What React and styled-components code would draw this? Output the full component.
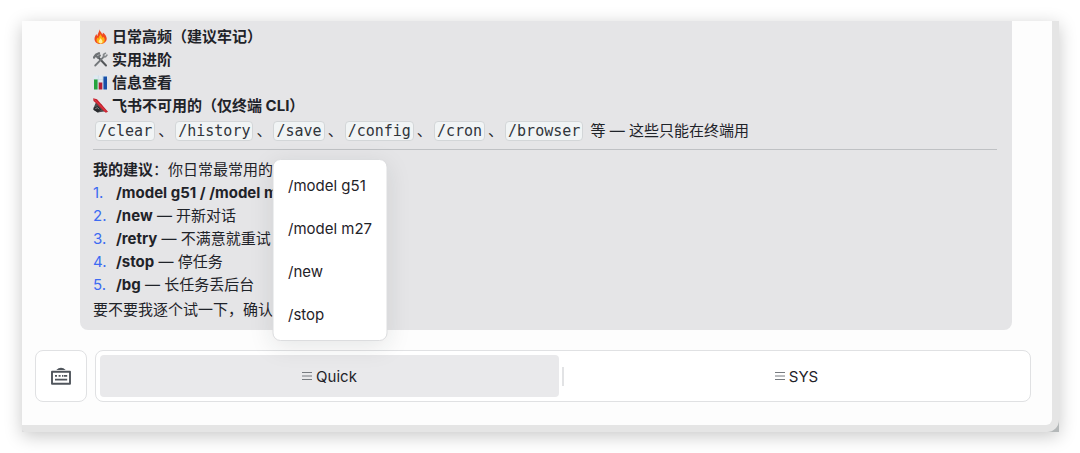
import React from "react";
import styled, { createGlobalStyle } from "styled-components";

const GlobalStyle = createGlobalStyle`
  *, *::before, *::after { box-sizing: border-box; }
  body {
    margin: 0;
    padding: 21px 21px 21px 22px;
    background: #fff;
    color: #1f2329;
    font: 15px/23px Inter, "Noto Sans CJK SC", sans-serif;
  }
  p, ul, ol { margin: 0; padding: 0; list-style: none; }
  button { font: inherit; color: inherit; cursor: pointer; }
`;

const Frame = styled.div`
  background: #b4b8b9;
  border-radius: 2px 0 0 2px;
  box-shadow: 0 4px 18px rgba(0, 0, 0, 0.22);
`;

const Edge = styled.div`
  padding: 0 7px 7px 0;
  background: #e5e5e5;
  border-radius: 2px 0 12px 2px;
`;

const Chat = styled.main`
  background: #fdfdfd;
  border-bottom-right-radius: 6px;
`;

const Bubble = styled.article`
  margin: 0 40px 0 58px;
  padding: 4px 15px 9px 13px;
  background: #e5e5e7;
  border-radius: 0 0 8px 8px;
`;

const Topic = styled.li`
  display: flex;
  align-items: center;
  gap: 4px;
  font-weight: 700;
  svg { width: 15px; height: 15px; flex: none; }
`;

const Commands = styled.p`
  margin-top: 2px;
`;

const Code = styled.code`
  display: inline-block;
  margin: 0 3px 0 2px;
  padding: 0 2px;
  border: 1px solid #d3d6d8;
  border-radius: 4px;
  background: #f1f4f5;
  color: #30353b;
  font: 15px/18px "DejaVu Sans Mono", monospace;
`;

const Rule = styled.hr`
  height: 1px;
  margin: 7px 0 8px;
  border: 0;
  background: #bfc1c4;
`;

const Steps = styled.ol`
  margin: 0 0 2px;
  counter-reset: step;
`;

const Step = styled.li`
  display: flex;
  counter-increment: step;
  &::before {
    content: counter(step) ".";
    width: 23px;
    color: #3d6bf2;
  }
`;

const Toolbar = styled.nav`
  display: flex;
  gap: 8px;
  padding: 20px 21px 23px 13px;
`;

const KeyboardButton = styled.button`
  display: grid;
  place-items: center;
  width: 52px;
  height: 52px;
  padding: 0;
  border: 1px solid #e0e1e3;
  border-radius: 8px;
  background: #fff;
`;

const Segments = styled.div`
  display: flex;
  flex: 1;
  align-items: center;
  gap: 3px;
  height: 52px;
  padding: 4px;
  border: 1px solid #e0e1e3;
  border-radius: 8px;
  background: #fff;
`;

const Segment = styled.div`
  position: relative;
  flex: 1;
  height: 100%;
`;

const SegmentButton = styled.button`
  display: flex;
  align-items: center;
  justify-content: center;
  gap: 4px;
  width: 100%;
  height: 100%;
  padding: 0;
  border: 0;
  border-radius: 4px;
  background: ${(p) => (p.$active ? "#e9e9eb" : "transparent")};
`;

const Divider = styled.span`
  width: 2px;
  height: 19px;
  background: #e2e3e5;
`;

const Menu = styled.div`
  position: absolute;
  bottom: calc(100% + 14px);
  left: 50%;
  transform: translateX(-50%);
  display: flex;
  flex-direction: column;
  width: 115px;
  padding: 4px 0;
  border: 1px solid #dcdddf;
  border-radius: 8px;
  background: #fff;
  box-shadow: 0 6px 24px rgba(31, 35, 41, 0.1);
`;

const MenuItem = styled.button`
  padding: 10px 15px;
  border: 0;
  background: transparent;
  text-align: left;
  white-space: nowrap;
`;

const FireIcon = () => (
  <svg viewBox="0 0 15 15" aria-hidden="true">
    <path d="M6.200.200c.6 2.200 2.500 3 3 5.200.6-.5.7-1.200.6-2 2.200 1.600 3.900 3.700 3.900 6.200 0 3.200-2.500 5.300-6 5.300S1.500 12.900 1.500 9.900c0-2.200 1.100-3.500 1.900-4.900.1 1 .5 1.700 1.100 2.100C4.300 4.400 6.700 2.800 6.200.200z" fill="#f04a20" />
    <path d="M7.500 4.800c.2 1.700 1.700 2.500 1.900 4 .4-.2.700-.6.800-1.100 1 1.100 1.500 2 1.500 3.200 0 2.300-1.700 3.800-4.100 3.800s-4.100-1.400-4.100-3.600c0-1.100.5-1.900 1-2.700.3.600.6.900 1.100 1C5.400 7.600 7.300 6.600 7.500 4.800z" fill="#ffb114" />
    <path d="M7.600 9c.1 1.200 1.900 1.800 1.900 3.500 0 1.300-.8 2-1.900 2s-1.900-.8-1.900-1.900C5.700 11.100 7.300 10.500 7.600 9z" fill="#fff0a0" />
  </svg>
);

const ToolsIcon = () => (
  <svg viewBox="0 0 15 15" aria-hidden="true" fill="none" strokeLinecap="round">
    <path d="M5 5l8 8.500" stroke="#54575a" strokeWidth="2" />
    <path d="M1 5.500l2-2.800L6 1.200M2.600 3.200l2.200 2.300 2-2" stroke="#6e7275" strokeWidth="2.200" />
    <path d="M11.200 4.300L2.200 13.500" stroke="#74787b" strokeWidth="1.800" />
    <path d="M12.500 1.200l-2 1.300-.1 2.200 2.200.1L14 3" stroke="#85898c" strokeWidth="1.500" />
  </svg>
);

const ChartIcon = () => (
  <svg viewBox="0 0 15 15" aria-hidden="true">
    <path d="M.5.500h14v14H.500z" fill="#dfe9f1" />
    <path d="M.5 4.500h14M.5 8h14M5.300.500v14M9.600.500v14" stroke="#bfd0de" strokeWidth=".5" />
    <path d="M1 4.500h3.600v10H1z" fill="#25a43d" />
    <path d="M5.700 7.500h3.600v7H5.700z" fill="#b32035" />
    <path d="M10.400 1.500H14v13h-3.600z" fill="#1950a8" />
  </svg>
);

const PlugIcon = () => (
  <svg viewBox="0 0 15 15" aria-hidden="true">
    <path d="M3 4l5.500 2.600 4.300 6.600-3.300.6-5 .700L.3 11.500l.8-2.700z" fill="#4b4d50" />
    <path d="M.600 9.500l4.400-1.200 3 3.200-3 3L.600 12z" fill="#292b2e" />
    <path d="M2.300 10.500l2.400-.8 1.400 1.600" stroke="#85888a" fill="none" />
    <path d="M.200.300l3.800.9 11 12.600-2.200.9L9.500 12 3.600 5.600.500 2.900z" fill="#c9202d" />
    <path d="M1.300 1.400l11.500 12" stroke="#e8505a" strokeWidth=".7" />
  </svg>
);

const KeyboardIcon = () => (
  <svg width="20" height="18" viewBox="0 0 20 18" fill="none" aria-hidden="true">
    <path d="M5.300 2.900Q7.500.800 10 .800t4.700 2.100z" fill="#50555c" />
    <path d="M1 4.700h18v12H1z" stroke="#50555c" strokeWidth="1.900" strokeLinejoin="round" />
    <path d="M4 8.800h2M7.600 8.800h2M11 8.800h1.200M12.800 8.800h3.400M4 12.600h12.200" stroke="#50555c" strokeWidth="1.700" />
  </svg>
);

const LinesIcon = () => (
  <svg width="10" height="10" viewBox="0 0 10 10" aria-hidden="true">
    <path d="M0 1.500h10M0 5h10M0 8.500h10" stroke="#777b80" />
  </svg>
);

const topics = [
  [FireIcon, "日常高频（建议牢记）"],
  [ToolsIcon, "实用进阶"],
  [ChartIcon, "信息查看"],
  [PlugIcon, "飞书不可用的（仅终端 CLI）"],
];

const commands = ["/clear", "/history", "/save", "/config", "/cron", "/browser"];

const steps = [
  ["/model g51 / /model m27", ""],
  ["/new", "开新对话"],
  ["/retry", "不满意就重试"],
  ["/stop", "停任务"],
  ["/bg", "长任务丢后台"],
];

const shortcuts = ["/model g51", "/model m27", "/new", "/stop"];

export default function App() {
  return (
    <>
      <GlobalStyle />
      <Frame>
        <Edge>
          <Chat>
            <Bubble>
              <ul>
                {topics.map(([Icon, title]) => (
                  <Topic key={title}>
                    <Icon />
                    {title}
                  </Topic>
                ))}
              </ul>
              <Commands>
                {commands.map((command, i) => (
                  <React.Fragment key={command}>
                    {i > 0 && "、"}
                    <Code>{command}</Code>
                  </React.Fragment>
                ))}{" "}
                等 — 这些只能在终端用
              </Commands>
              <Rule />
              <p>
                <strong>我的建议</strong>：你日常最常用的
              </p>
              <Steps>
                {steps.map(([command, note]) => (
                  <Step key={command}>
                    <span>
                      <strong>{command}</strong>
                      {note && ` — ${note}`}
                    </span>
                  </Step>
                ))}
              </Steps>
              <p>要不要我逐个试一下，确认</p>
            </Bubble>
            <Toolbar>
              <KeyboardButton aria-label="键盘">
                <KeyboardIcon />
              </KeyboardButton>
              <Segments>
                <Segment>
                  <SegmentButton $active aria-expanded="true">
                    <LinesIcon />
                    Quick
                  </SegmentButton>
                  <Menu>
                    {shortcuts.map((label) => (
                      <MenuItem key={label}>{label}</MenuItem>
                    ))}
                  </Menu>
                </Segment>
                <Divider />
                <Segment>
                  <SegmentButton>
                    <LinesIcon />
                    SYS
                  </SegmentButton>
                </Segment>
              </Segments>
            </Toolbar>
          </Chat>
        </Edge>
      </Frame>
    </>
  );
}
